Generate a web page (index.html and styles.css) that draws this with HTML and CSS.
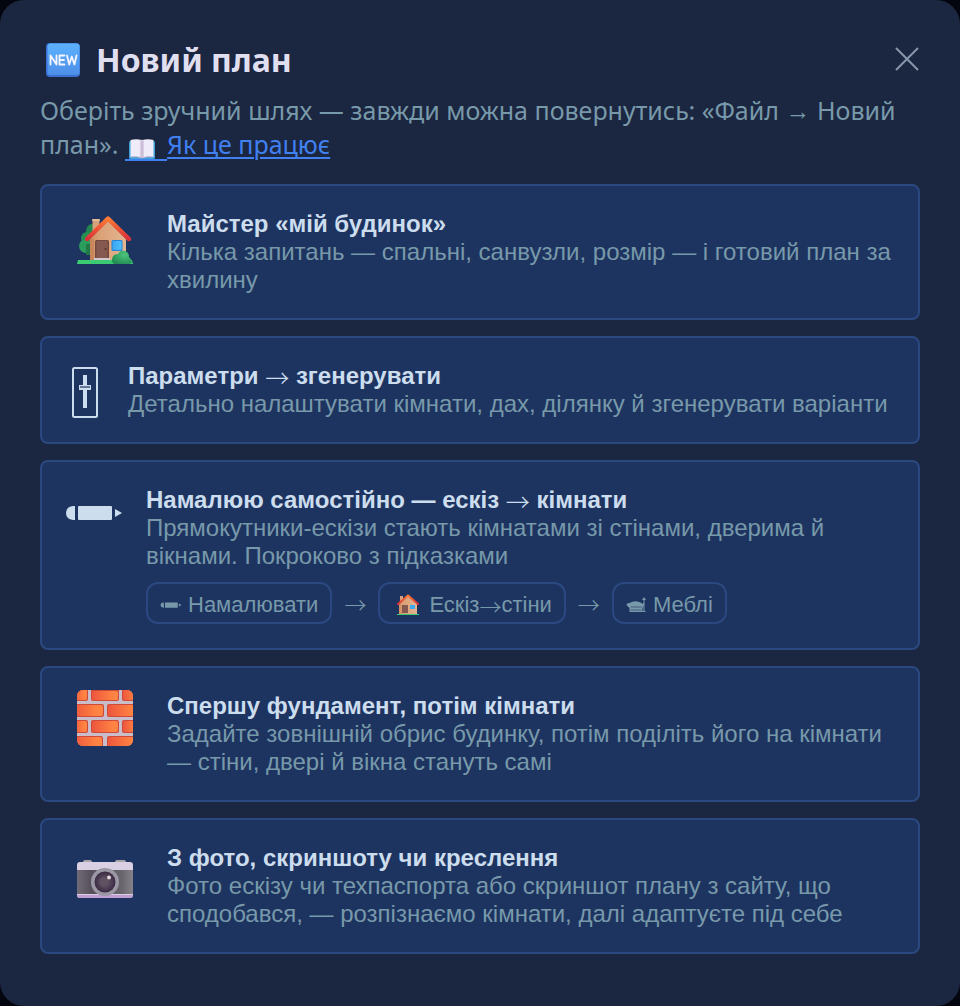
FILE: index.html
```html
<!DOCTYPE html>
<html lang="uk">
<head>
<meta charset="utf-8">
<meta name="viewport" content="width=device-width, initial-scale=1">
<title>Новий план</title>
<link rel="stylesheet" href="styles.css">
</head>
<body>
<svg class="defs" aria-hidden="true">
  <defs>
    <linearGradient id="wall" x1="0" x2="1"><stop offset="0" stop-color="#d08c60"/><stop offset=".25" stop-color="#dba075"/><stop offset="1" stop-color="#e3b592"/></linearGradient>
    <linearGradient id="roof" x1="0" y1="0" x2="0" y2="1"><stop offset="0" stop-color="#ff7a35"/><stop offset="1" stop-color="#dc2f38"/></linearGradient>
    <linearGradient id="glass" x1="0" x2="1"><stop offset="0" stop-color="#3aa6f0"/><stop offset="1" stop-color="#4fbcfa"/></linearGradient>
    <radialGradient id="bush" cx=".65" cy=".3" r=".8"><stop offset="0" stop-color="#4cc47c"/><stop offset="1" stop-color="#218a50"/></radialGradient>
    <linearGradient id="brick" x1="0" x2="1"><stop offset="0" stop-color="#ed563d"/><stop offset=".8" stop-color="#ff8342"/></linearGradient>
    <linearGradient id="new" x1="0" y1="0" x2="0" y2="1"><stop offset="0" stop-color="#5cb2ff"/><stop offset="1" stop-color="#4e8ee8"/></linearGradient>
    <linearGradient id="body" x1="0" x2="1"><stop offset="0" stop-color="#716b78"/><stop offset=".25" stop-color="#57505c"/><stop offset=".8" stop-color="#68656c"/><stop offset="1" stop-color="#85828a"/></linearGradient>
    <radialGradient id="lens"><stop offset="0" stop-color="#5d5060"/><stop offset=".5" stop-color="#55465b"/><stop offset="1" stop-color="#3a2a42"/></radialGradient>
    <clipPath id="wallclip"><rect width="56" height="56" rx="6"/></clipPath>
    <symbol id="house" viewBox="0 0 56 50">
      <ellipse cx="15" cy="17" rx="6" ry="8" fill="#21874e"/><circle cx="10" cy="23" r="6" fill="#278f54"/><circle cx="9" cy="31" r="7" fill="#2b9d5c"/><path d="M9 29h8v11H9z" fill="#1f7a48"/>
      <path d="M15.500 4h7v14h-7z" fill="#d5a17c"/><rect x="15" y="4" width="8" height="2" rx="1" fill="#e6b999"/>
      <path d="M13 24 31 5l18 19v22H13z" fill="url(#wall)"/><path d="M13 24h4v21h-4z" fill="#bf7950" opacity=".5"/>
      <path d="m10 25.500 21-21 21 21" fill="none" stroke="#b96846" stroke-width="3" opacity=".4"/>
      <path d="m10 24 21-20.500L52 24" fill="none" stroke="url(#roof)" stroke-width="4.400" stroke-linecap="round" stroke-linejoin="round"/>
      <rect x="18" y="25" width="14" height="19" rx="1.500" fill="#73483f"/><rect x="19.500" y="26" width="11" height="18" rx="1" fill="#855850"/><circle cx="28.500" cy="34" r="1" fill="#58342f"/>
      <path d="M17 43h16v2H17z" fill="#d1c8d0"/><rect x="34.500" y="25" width="11" height="11" rx="1.500" fill="#2384da"/><rect x="35.500" y="26" width="9" height="9" rx="1" fill="url(#glass)"/>
      <path d="M1 45h54l1 4H0z" fill="#3ccb72"/><path d="M35 45q0-6 6-6 2-4 7-3 4 1 4 6 3 2 3 5 0 2-6 2H38q-3 0-3-4" fill="url(#bush)"/>
    </symbol>
    <symbol id="house-small" viewBox="0 0 22 22">
      <path d="M3 2h3v6H3z" fill="#d5a17c"/><path d="M2 10 11 2l9 8v10H2z" fill="url(#wall)"/>
      <path d="M1 10 11 1.500 21 10" fill="none" stroke="url(#roof)" stroke-width="2" stroke-linecap="round" stroke-linejoin="round"/>
      <path d="M5 11h6v8H5z" fill="#855850"/><path d="M13 11h5v4h-5z" fill="#3ca9f2"/><path d="M0 20h22v1H0z" fill="#3ccb72"/>
    </symbol>
    <symbol id="pencil" viewBox="0 0 56 16">
      <path d="M9 1v14H7Q0 14 0 8t7-7z"/><rect x="12" y="1" width="34" height="14" rx="1"/><path d="m49 4 7 4-7 4z"/>
    </symbol>
    <symbol id="couch" viewBox="0 0 20 18">
      <path d="M3 7q6-3.500 12 0l1 1 1-1 1 1-2 4v4H3v-4L0 9q0-2 3-2z"/><path d="m17.500 1 2 3h-4zM17 4h1v11h1v1h-3v-1h1z"/><path d="M4 11h11M4 14h11" fill="none" stroke="#1e3460" stroke-width=".6"/>
    </symbol>
  </defs>
</svg>
<main class="dialog" role="dialog" aria-labelledby="dialog-title">
  <header class="header">
    <svg class="new-icon" viewBox="0 0 34 34" aria-hidden="true">
      <rect width="34" height="34" rx="4" fill="#3b70d3"/><rect x="1.500" y=".5" width="32" height="31.500" rx="3" fill="url(#new)"/>
      <path d="M4.500 21.500v-9l6 9v-9M18.500 12.500h-5v9h5M13.500 17h4.500M21 12.500l2.200 9 2.600-8 2.600 8 2.100-9" fill="none" stroke="#f5f5ff" stroke-width="1.800" stroke-linecap="round" stroke-linejoin="round"/>
    </svg>
    <h1 class="title" id="dialog-title">Новий план</h1>
    <button class="close" type="button" aria-label="Закрити">
      <svg class="close-icon" viewBox="0 0 24 24"><path d="M1 1 23 23M23 1 1 23" fill="none" stroke="currentColor" stroke-width="2"/></svg>
    </button>
  </header>
  <p class="intro">Оберіть зручний шлях — завжди можна повернутись: «Файл → Новий план». <a class="help" href="#"><span class="book"><svg class="book-icon" viewBox="0 0 26 20" aria-hidden="true"><rect y="2" width="26" height="18" rx="1.500" fill="#3fa3d8"/><path d="M1.500 1Q7-.5 13 1q6-1.500 11.500 0v17q-6-1-11.500 1-5.500-2-11.500-1z" fill="#f0ebf8"/><path d="M11 1q2 0 2 1 0-1 2-1v17l-2 1-2-1z" fill="#d9cfe3"/><path d="M13 2v17M2 18q6-1 11 1 5-2 11-1" fill="none" stroke="#b9a5cc" stroke-width=".8"/></svg></span>Як це працює</a></p>
  <div class="options">
    <button class="card" type="button">
      <span class="emoji"><svg class="house-icon" aria-hidden="true"><use href="#house"/></svg></span>
      <span class="text"><strong class="name">Майстер «мій будинок»</strong><span class="desc">Кілька запитань — спальні, санвузли, розмір — і готовий план за хвилину</span></span>
    </button>
    <button class="card" type="button">
      <span class="slider-box"><svg class="slider-icon" viewBox="0 0 26 52" aria-hidden="true"><rect x="1" y="2" width="24" height="49" rx="1.500" fill="none" stroke="currentColor" stroke-width="2"/><path d="M11 9h4v10h4v5h-4v18h-4V24H7v-5h4z" fill="currentColor"/><path d="M8 21h10" stroke="#1e3460" stroke-width="1.200"/></svg></span>
      <span class="text"><strong class="name">Параметри <span class="glyph">→</span> згенерувати</strong><span class="desc">Детально налаштувати кімнати, дах, ділянку й згенерувати варіанти</span></span>
    </button>
    <button class="card" type="button">
      <span class="pencil-box"><svg class="pencil-icon" aria-hidden="true"><use href="#pencil"/></svg></span>
      <span class="text"><strong class="name">Намалюю самостійно — ескіз <span class="glyph">→</span> кімнати</strong><span class="desc">Прямокутники-ескізи стають кімнатами зі стінами, дверима й вікнами. Покроково з підказками</span>
        <span class="steps">
          <span class="chip"><svg class="chip-pencil" aria-hidden="true"><use href="#pencil"/></svg>Намалювати</span>
          <span class="glyph">→</span>
          <span class="chip"><span class="chip-emoji"><svg class="chip-house" aria-hidden="true"><use href="#house-small"/></svg></span><span>Ескіз<span class="glyph">→</span>стіни</span></span>
          <span class="glyph">→</span>
          <span class="chip"><svg class="chip-couch" aria-hidden="true"><use href="#couch"/></svg>Меблі</span>
        </span>
      </span>
    </button>
    <button class="card" type="button">
      <span class="emoji"><svg class="brick-icon" viewBox="0 0 56 56" aria-hidden="true"><g clip-path="url(#wallclip)"><rect width="56" height="56" fill="#c9bdca"/>
        <g fill="#d04a3c"><rect x="-4" y="-3" width="15" height="14" rx="2"/><rect x="14" y="-3" width="28" height="14" rx="2"/><rect x="45" y="-3" width="15" height="14" rx="2"/><rect x="-4" y="14" width="31" height="13" rx="2"/><rect x="30" y="14" width="31" height="13" rx="2"/><rect x="-4" y="30" width="15" height="13" rx="2"/><rect x="14" y="30" width="28" height="13" rx="2"/><rect x="45" y="30" width="15" height="13" rx="2"/><rect x="-4" y="46" width="30" height="13" rx="2"/><rect x="30" y="46" width="31" height="13" rx="2"/></g>
        <g fill="url(#brick)"><rect x="-4" y="-3" width="14" height="13" rx="2"/><rect x="15" y="1" width="26" height="9" rx="1.500"/><rect x="46" y="-3" width="15" height="13" rx="2"/><rect x="-4" y="15" width="30" height="11" rx="2"/><rect x="31" y="15" width="30" height="11" rx="2"/><rect x="-4" y="31" width="14" height="11" rx="2"/><rect x="15" y="31" width="26" height="11" rx="2"/><rect x="46" y="31" width="15" height="11" rx="2"/><rect x="-4" y="47" width="29" height="12" rx="2"/><rect x="31" y="47" width="30" height="12" rx="2"/></g></g></svg></span>
      <span class="text"><strong class="name">Спершу фундамент, потім кімнати</strong><span class="desc">Задайте зовнішній обрис будинку, потім поділіть його на кімнати — стіни, двері й вікна стануть самі</span></span>
    </button>
    <button class="card" type="button">
      <span class="emoji"><svg class="camera-icon" viewBox="0 0 56 38" aria-hidden="true">
        <path d="M6 2q0-2 2-2h5q2 0 2 2zM38 2q0-2 2-2h7q2 0 2 2z" fill="#aaa4ac"/><rect x="0" y="2" width="56" height="36" rx="3" fill="#d9d0e3"/><path d="M0 10h56v24H0z" fill="url(#body)"/><path d="M0 35h56q0 3-3 3H3q-3 0-3-3" fill="#c19ed1"/>
        <circle cx="28" cy="22" r="14" fill="#9b97a5"/><circle cx="28" cy="22" r="10.500" fill="url(#lens)"/><circle cx="27" cy="22" r="5" fill="#685765" opacity=".5"/><circle cx="32" cy="17.500" r="2" fill="#e5d7dc"/></svg></span>
      <span class="text"><strong class="name">З фото, скриншоту чи креслення</strong><span class="desc">Фото ескізу чи техпаспорта або скриншот плану з сайту, що сподобався, — розпізнаємо кімнати, далі адаптуєте під себе</span></span>
    </button>
  </div>
</main>
</body>
</html>
```
FILE: styles.css
```css
* { box-sizing: border-box; }
body { margin: 0; background: #03060e; }
.defs { position: absolute; width: 0; height: 0; }
.dialog {
  padding: 40px 40px 52px;
  border-radius: 24px;
  background: #1b2640;
  color: #7899aa;
  font-family: "Segoe UI", "Noto Sans", sans-serif;
}
.header { display: flex; align-items: center; height: 40px; padding-left: 6px; }
.new-icon { width: 34px; height: 34px; margin-right: 16px; }
.title { margin: 0; color: #e0dff0; font-size: 32px; line-height: 40px; font-weight: 700; }
.close {
  display: flex;
  margin: 0 0 3px auto;
  padding: 0 1px;
  border: 0;
  background: none;
  color: #8797aa;
}
.close-icon { width: 24px; height: 24px; }
.intro { margin: 13px 0 23px; font-size: 25px; line-height: 34px; }
.help { color: #4080f0; text-decoration: underline; text-decoration-thickness: 2px; text-underline-offset: 3px; }
.book {
  display: inline-flex;
  padding: 0 12px 0 4px;
  border-bottom: 2px solid;
  vertical-align: -5px;
}
.book-icon { width: 26px; height: 20px; }
.options { display: flex; flex-direction: column; gap: 16px; }
.card {
  display: flex;
  align-items: flex-start;
  gap: 24px;
  width: 100%;
  padding: 24px;
  border: 2px solid #2b4980;
  border-radius: 8px;
  background: #1e3460;
  color: #ccddee;
  font: 24px/28px "Liberation Sans", Arial, sans-serif;
  text-align: left;
}
.text { flex: 1; min-width: 0; }
.name, .desc { display: block; }
.desc { color: #7799aa; }
.glyph { font-family: "Noto Sans CJK JP", sans-serif; font-weight: 300; line-height: 0; vertical-align: -3px; }
.emoji { flex: none; display: flex; justify-content: center; width: 77px; }
.house-icon { width: 56px; height: 50px; margin-top: 5px; }
.brick-icon { width: 56px; height: 56px; margin-top: -2px; }
.camera-icon { width: 56px; height: 38px; margin-top: 16px; }
.slider-box { flex: none; display: flex; justify-content: center; width: 38px; }
.slider-icon { width: 26px; height: 52px; margin-top: 4px; }
.pencil-box { flex: none; width: 56px; }
.pencil-icon { display: block; width: 56px; height: 16px; margin-top: 19px; fill: currentColor; }
.steps {
  display: flex;
  flex-wrap: wrap;
  align-items: center;
  gap: 12px;
  margin-top: 12px;
  color: #7799aa;
  font-size: 22px;
  line-height: 26px;
}
.chip {
  display: flex;
  align-items: center;
  gap: 6px;
  padding: 8px 12px 4px;
  border: 2px solid #2b4980;
  border-radius: 12px;
}
.chip svg { fill: currentColor; }
.chip-pencil { width: 22px; height: 6px; }
.chip-emoji { display: flex; justify-content: center; width: 31px; }
.chip-house { width: 22px; height: 22px; }
.chip-couch { width: 21px; height: 18px; }
```
